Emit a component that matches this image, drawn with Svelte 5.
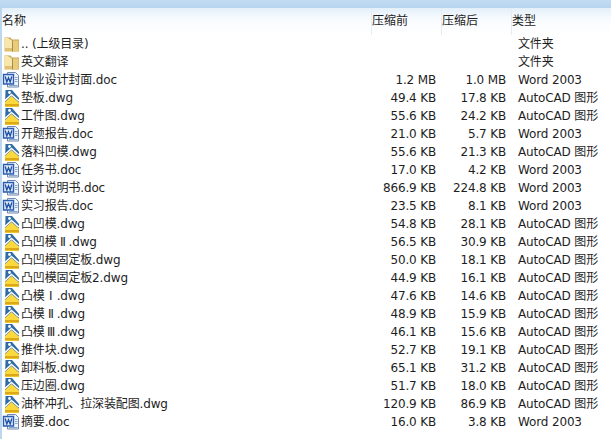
<script>
  const DWG = "AutoCAD 图形";
  const DOC = "Word 2003";
  const files = [
    { icon: "folder", name: ".. (上级目录)", before: "", after: "", type: "文件夹" },
    { icon: "folder", name: "英文翻译", before: "", after: "", type: "文件夹" },
    { icon: "doc", name: "毕业设计封面.doc", before: "1.2 MB", after: "1.0 MB", type: DOC },
    { icon: "dwg", name: "垫板.dwg", before: "49.4 KB", after: "17.8 KB", type: DWG },
    { icon: "dwg", name: "工件图.dwg", before: "55.6 KB", after: "24.2 KB", type: DWG },
    { icon: "doc", name: "开题报告.doc", before: "21.0 KB", after: "5.7 KB", type: DOC },
    { icon: "dwg", name: "落料凹模.dwg", before: "55.6 KB", after: "21.3 KB", type: DWG },
    { icon: "doc", name: "任务书.doc", before: "17.0 KB", after: "4.2 KB", type: DOC },
    { icon: "doc", name: "设计说明书.doc", before: "866.9 KB", after: "224.8 KB", type: DOC },
    { icon: "doc", name: "实习报告.doc", before: "23.5 KB", after: "8.1 KB", type: DOC },
    { icon: "dwg", name: "凸凹模.dwg", before: "54.8 KB", after: "28.1 KB", type: DWG },
    { icon: "dwg", name: "凸凹模Ⅱ.dwg", before: "56.5 KB", after: "30.9 KB", type: DWG },
    { icon: "dwg", name: "凸凹模固定板.dwg", before: "50.0 KB", after: "18.1 KB", type: DWG },
    { icon: "dwg", name: "凸凹模固定板2.dwg", before: "44.9 KB", after: "16.1 KB", type: DWG },
    { icon: "dwg", name: "凸模Ⅰ.dwg", before: "47.6 KB", after: "14.6 KB", type: DWG },
    { icon: "dwg", name: "凸模Ⅱ.dwg", before: "48.9 KB", after: "15.9 KB", type: DWG },
    { icon: "dwg", name: "凸模Ⅲ.dwg", before: "46.1 KB", after: "15.6 KB", type: DWG },
    { icon: "dwg", name: "推件块.dwg", before: "52.7 KB", after: "19.1 KB", type: DWG },
    { icon: "dwg", name: "卸料板.dwg", before: "65.1 KB", after: "31.2 KB", type: DWG },
    { icon: "dwg", name: "压边圈.dwg", before: "51.7 KB", after: "18.0 KB", type: DWG },
    { icon: "dwg", name: "油杯冲孔、拉深装配图.dwg", before: "120.9 KB", after: "86.9 KB", type: DWG },
    { icon: "doc", name: "摘要.doc", before: "16.0 KB", after: "3.8 KB", type: DOC },
  ];

  // roman numerals are full width in the original, so they get a 12px cell
  const parts = (name) => name.split(/([Ⅰ-Ⅲ])/);
</script>

{#snippet folderIcon()}
  <svg class="icon" viewBox="0 0 18 18" width="18" height="18">
    <path d="M2.500 2.500h6l1.500 2h7v12h-14.500z" fill="#c9a854" />
    <path d="M2.500 3h3.500L10.500 6v10.500h-8z" fill="#f8e7ad" />
    <path d="M10.500 5.500H16.500v11h-6z" fill="#e8cb7c" />
    <path d="M10.500 5.500V16.500" stroke="#ab8c42" stroke-width="1" />
    <path d="M3 14.500h7" stroke="#e0c276" stroke-width="3" />
  </svg>
{/snippet}

{#snippet docIcon()}
  <svg class="icon" viewBox="0 0 18 18" width="18" height="18">
    <path d="M5.500 1.500h8l3 3v11.500h-11z" fill="#eef4fb" stroke="#6f88ad" />
    <path d="M1.500 3.500h10v9.500h-10z" fill="#dfeafa" stroke="#2b5cb0" stroke-width="1.400" />
    <path d="M3.200 5.500l1.600 5.500 1.700-4.200 1.700 4.200 1.600-5.500" fill="none" stroke="#1f4fa0" stroke-width="1.300" />
    <path d="M13 6.500h2.500M13 8.500h2.500M13 10.500h2.500M7 14.500h8.500" stroke="#8aa5cf" stroke-width="1" />
  </svg>
{/snippet}

{#snippet dwgIcon()}
  <svg class="icon" viewBox="0 0 18 18" width="18" height="18">
    <path d="M3.500 1H10l7 8v8.500H3z" fill="#2f6ba6" />
    <path d="M3 11.500l6.500-6 7.500 6.500" fill="none" stroke="#fff" stroke-width="1.500" />
    <circle cx="7.500" cy="3.500" r="1.400" fill="#fff" />
    <path d="M3 13l6.500-6 7.500 6.500v4.500H3z" fill="#fbd93e" />
    <path d="M3 16.200h14" stroke="#dba816" stroke-width="2.400" />
  </svg>
{/snippet}

<div class="window">
  <div class="titlebar"></div>
  <div class="list">
    <div class="head">
      <div class="hcell">名称</div>
      <div class="hcell">压缩前</div>
      <div class="hcell">压缩后</div>
      <div class="hcell">类型</div>
    </div>
    <div class="rows">
      {#each files as f}
        <div class="row">
          <div class="name">
            {#if f.icon === "folder"}
              {@render folderIcon()}
            {:else if f.icon === "doc"}
              {@render docIcon()}
            {:else}
              {@render dwgIcon()}
            {/if}
            <span>
              {#each parts(f.name) as part, i}
                {#if i % 2}<span class="num">{part}</span>{:else}{part}{/if}
              {/each}
            </span>
          </div>
          <div class="size">{f.before}</div>
          <div class="size">{f.after}</div>
          <div class="type">{f.type}</div>
        </div>
      {/each}
    </div>
  </div>
</div>

<style>
  :global(body) {
    margin: 0;
    background: #fff;
  }

  .window {
    width: 611px;
    height: 439px;
    overflow: hidden;
    display: flex;
    flex-direction: column;
    font: 12px "DejaVu Sans", "Noto Sans CJK SC", sans-serif;
    letter-spacing: -0.15px;
    color: #1e1e1e;
    background: #bcd7f0;
  }

  .titlebar {
    height: 8px;
    flex: none;
    background: linear-gradient(#c3dcf4, #b6d3ee);
  }

  .list {
    flex: 1;
    margin-left: 2px;
    background: #fff;
  }

  .head {
    display: grid;
    grid-template-columns: 369px 70px 70px 1fr;
    height: 27px;
    background: linear-gradient(#e3eff9, #f8fbfe 40%, #fff);
  }

  .hcell {
    padding-top: 4px;
    border-left: 1px solid #e4ebf3;
    line-height: 18px;
    letter-spacing: 0;
  }

  .hcell:first-child {
    border-left: 0;
  }

  .row {
    display: grid;
    grid-template-columns: 364px 70px 70px 1fr;
    height: 18px;
    line-height: 18px;
    white-space: nowrap;
  }

  .name {
    display: flex;
    align-items: center;
    gap: 1px;
  }

  .num {
    display: inline-block;
    width: 12px;
    text-align: center;
    font-family: "Liberation Serif", serif;
    letter-spacing: 0;
  }

  .icon {
    flex: none;
  }

  .size {
    text-align: right;
  }

  .type {
    padding-left: 12px;
  }
</style>
